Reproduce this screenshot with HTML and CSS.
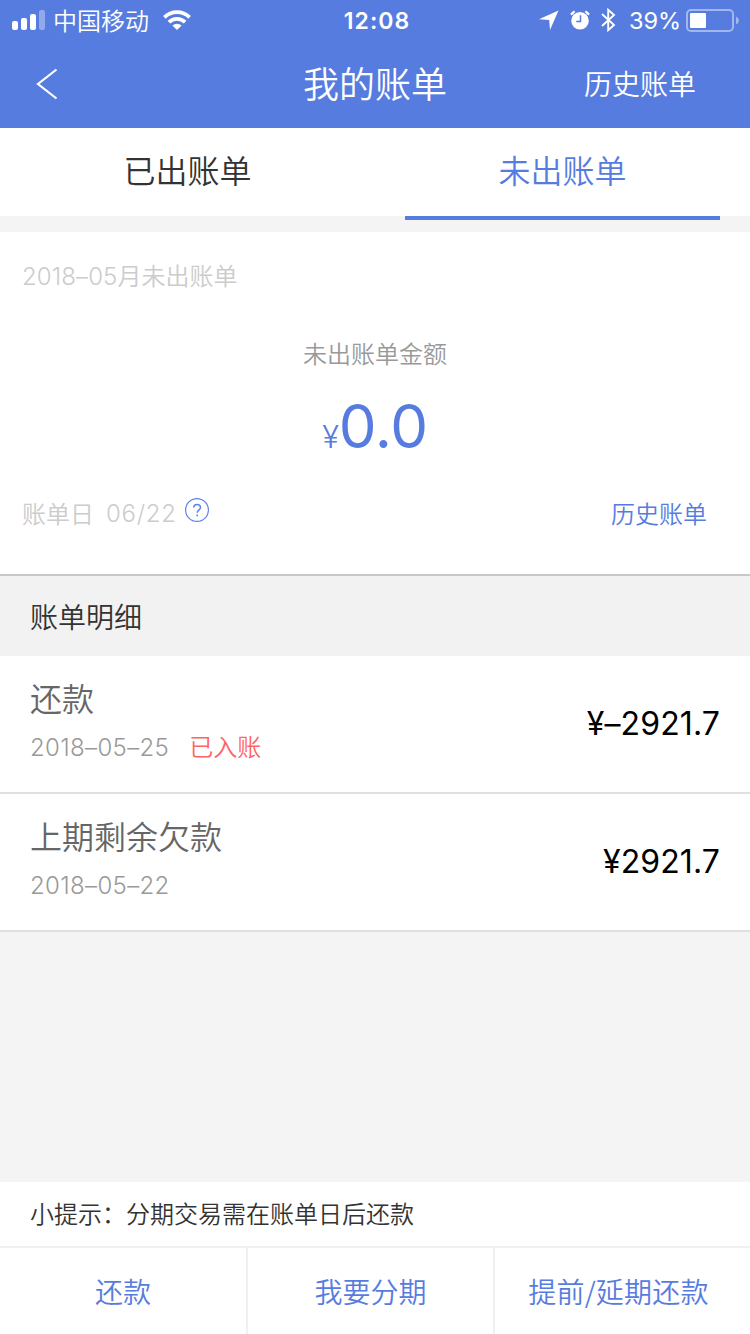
FILE: index.html
```
<!DOCTYPE html>
<html lang="zh-CN">
<head>
    <meta charset="UTF-8">
    <meta name="viewport" content="width=device-width, initial-scale=1.0">
    <title>我的账单</title>
    <link rel="stylesheet" href="styles.css">
</head>
<body>
    <div class="page">
        <header class="header">
            <div class="status">
                <div class="status-left">
                    <svg class="signal" width="34" height="20" viewBox="0 0 34 20" fill="#fff">
                        <rect x="0" y="11" width="6" height="9" rx="2"/>
                        <rect x="9" y="8" width="6" height="12" rx="2"/>
                        <rect x="18" y="4" width="6" height="16" rx="2"/>
                        <rect x="27" y="0" width="6" height="20" rx="2" opacity=".35"/>
                    </svg>
                    <span class="carrier">中国移动</span>
                    <svg class="wifi" width="28" height="20" viewBox="0 0 28 20" fill="none" stroke="#fff" stroke-width="3.8">
                        <path d="M1.4 7.3a18 18 0 0 1 25.2 0"/>
                        <path d="M5.9 12.1a11.6 11.6 0 0 1 16.2 0"/>
                        <path d="M14 20l-4.6-4.4a6.7 6.7 0 0 1 9.2 0z" fill="#fff" stroke="none"/>
                    </svg>
                </div>
                <div class="time">12:08</div>
                <div class="status-right">
                    <svg class="location" width="20" height="20" viewBox="0 0 20 20" fill="#fff">
                        <path d="M19.5 .5L11 20 10.2 10 0 9.2z"/>
                    </svg>
                    <svg class="alarm" width="20" height="20" viewBox="0 0 20 20">
                        <circle cx="10" cy="10.7" r="8.8" fill="#fff"/>
                        <path d="M.9 4.6L4.6 1.2M15.4 1.2l3.7 3.4" fill="none" stroke="#fff" stroke-width="2.2"/>
                        <path d="M10.5 5.2v6.2H6.2" fill="none" stroke="#577ce0" stroke-width="1.5"/>
                    </svg>
                    <svg class="bluetooth" width="15" height="24" viewBox="0 0 15 24" fill="none" stroke="#fff" stroke-width="1.9">
                        <path d="M1 6l12 11-5.8 5.2V1.8L13 7 1 18"/>
                    </svg>
                    <span class="percent">39%</span>
                    <svg class="battery" width="53" height="24" viewBox="0 0 53 24">
                        <rect x="1" y="1" width="46" height="21" rx="4" fill="none" stroke="#fff" stroke-width="2" opacity=".45"/>
                        <rect x="4" y="4" width="16" height="15" rx="1" fill="#fff"/>
                        <path d="M50 7.5q3 1.5 3 4t-3 4z" fill="#fff" opacity=".45"/>
                    </svg>
                </div>
            </div>
            <div class="nav">
                <svg class="back" width="22" height="32" viewBox="0 0 22 32" fill="none" stroke="#fff" stroke-width="2.2">
                    <path d="M20.5 1.5L2 16l18.5 14.5"/>
                </svg>
                <h1 class="title">我的账单</h1>
                <a class="history">历史账单</a>
            </div>
        </header>

        <div class="tabs">
            <div class="tab">已出账单</div>
            <div class="tab tab-active">未出账单</div>
        </div>

        <section class="summary">
            <div class="month"><span class="num">2018–05</span>月未出账单</div>
            <div class="amount-label">未出账单金额</div>
            <div class="amount"><span class="yen">¥</span>0.0</div>
            <div class="bill-day">
                <span>账单日</span>
                <span class="day num">06/22</span>
                <svg class="help" width="24" height="24" viewBox="0 0 24 24" fill="none" stroke="#5b82f0">
                    <circle cx="12" cy="12" r="11.4" stroke-width="1.2"/>
                    <path d="M8.7 9.6c0-4.2 6.8-4.2 6.8-.2 0 2.5-3.3 2.6-3.3 5.4" stroke-width="1.5"/>
                    <path d="M12.2 16.4v1.8" stroke-width="1.6"/>
                </svg>
                <a class="bill-link">历史账单</a>
            </div>
        </section>

        <h2 class="detail-title">账单明细</h2>
        <ul class="list">
            <li class="item">
                <div>
                    <div class="item-name">还款</div>
                    <div class="item-info"><span class="num">2018–05–25</span><span class="item-status">已入账</span></div>
                </div>
                <div class="item-money">¥–2921.7</div>
            </li>
            <li class="item">
                <div>
                    <div class="item-name">上期剩余欠款</div>
                    <div class="item-info"><span class="num">2018–05–22</span></div>
                </div>
                <div class="item-money">¥2921.7</div>
            </li>
        </ul>

        <footer class="footer">
            <div class="tip">小提示：分期交易需在账单日后还款</div>
            <div class="actions">
                <a class="action">还款</a>
                <a class="action">我要分期</a>
                <a class="action">提前/延期还款</a>
            </div>
        </footer>
    </div>
</body>
</html>
```
FILE: styles.css
```
* {
    box-sizing: border-box;
}
body {
    margin: 0;
    background-color: #f4f4f4;
    font-family: "Noto Sans CJK SC", sans-serif;
    font-weight: 350;
}
h1, h2, ul {
    margin: 0;
    padding: 0;
    font-weight: 350;
    list-style: none;
}
svg {
    display: block;
    flex: none;
}
.num {
    font-family: Inter, "Noto Sans CJK SC", sans-serif;
    font-weight: 350;
    letter-spacing: 0.35px;
}
.page {
    display: flex;
    flex-direction: column;
    width: 750px;
    height: 1334px;
}

/* header */
.header {
    height: 128px;
    background-color: #577ce0;
    color: #fff;
}
.status {
    display: grid;
    grid-template-columns: 300px 154px 296px;
    grid-template-rows: 40px;
    height: 40px;
    line-height: 40px;
    font-size: 24px;
}
.status-left,
.status-right {
    display: flex;
    align-items: center;
}
.status-left {
    padding-left: 12px;
}
.carrier {
    margin-left: 7px;
}
.wifi {
    margin-left: 14px;
}
.time {
    padding-top: 1px;
    font-family: Inter, sans-serif;
    font-weight: 600;
    font-size: 23px;
    letter-spacing: 1px;
    text-align: center;
}
.status-right {
    padding-left: 85px;
}
.alarm {
    margin-left: 11px;
}
.bluetooth {
    margin-left: 11px;
}
.percent {
    width: 64px;
    padding: 2px 0 0 13px;
    white-space: nowrap;
    font-family: Inter, sans-serif;
    font-weight: 400;
    font-size: 23.5px;
}
.battery {
    margin: 1px 0 0 6px;
}
.nav {
    display: grid;
    grid-template-columns: 220px 310px 220px;
    align-items: center;
    height: 88px;
}
.back {
    margin-left: 36px;
}
.title {
    height: 88px;
    font-size: 36px;
    line-height: 84px;
    text-align: center;
}
.history {
    height: 88px;
    font-size: 28px;
    line-height: 87px;
    text-align: center;
}

/* tabs */
.tabs {
    display: flex;
    height: 88px;
    margin-bottom: 16px;
    background-color: #fff;
}
.tab {
    flex: 1;
    line-height: 83px;
    font-size: 32px;
    text-align: center;
    color: #333;
}
.tab-active {
    position: relative;
    color: #577ce0;
}
.tab-active::after {
    content: "";
    position: absolute;
    left: 30px;
    right: 30px;
    bottom: -4px;
    height: 4px;
    background-color: #577ce0;
}

/* summary */
.summary {
    height: 344px;
    padding: 23px 43px 0 22px;
    background-color: #fff;
    border-bottom: 2px solid #c8c8c8;
    font-size: 24px;
    line-height: 40px;
}
.month {
    color: #ccc;
}
.month .num {
    letter-spacing: 0.1px;
}
.amount-label {
    margin: 36px -21px 0 0;
    text-align: center;
    color: #999;
}
.amount {
    margin: 17px -21px 0 0;
    font-family: Inter, sans-serif;
    font-weight: 400;
    font-size: 60px;
    line-height: 72px;
    text-align: center;
    letter-spacing: -0.3px;
    color: #577ce0;
}
.yen {
    font-size: 31px;
    font-weight: 350;
}
.bill-day {
    display: flex;
    align-items: center;
    height: 40px;
    margin-top: 20px;
    color: #ccc;
}
.day {
    padding-top: 1px;
    margin-left: 12px;
    letter-spacing: 0.7px;
}
.help {
    margin: 0 0 6px 8px;
}
.bill-link {
    margin-left: auto;
    color: #577ce0;
}

/* bill details */
.detail-title {
    height: 80px;
    padding-left: 30px;
    background-color: #f2f2f2;
    font-size: 28px;
    line-height: 80px;
    color: #333;
}
.item {
    display: flex;
    justify-content: space-between;
    height: 138px;
    padding: 18px 30px 0;
    background-color: #fff;
    border-bottom: 2px solid #e0e0e0;
}
.item-name {
    font-size: 32px;
    line-height: 46px;
    color: #666;
}
.item-info {
    margin-top: 6px;
    font-size: 24px;
    line-height: 40px;
    color: #999;
}
.item-status {
    margin-left: 20px;
    color: #ff6464;
}
.item-money {
    font-family: Inter, sans-serif;
    font-weight: 400;
    font-size: 32px;
    line-height: 100px;
    letter-spacing: 0.1px;
    color: #000;
}

/* footer */
.footer {
    margin-top: auto;
    background-color: #fff;
}
.tip {
    height: 66px;
    padding-left: 30px;
    border-bottom: 2px solid #f0f0f0;
    font-size: 24px;
    line-height: 62px;
    color: #333;
}
.actions {
    display: grid;
    grid-template-columns: 248px 247px 255px;
    height: 86px;
}
.action {
    border-right: 2px solid #f0f0f0;
    font-size: 28px;
    line-height: 87px;
    text-align: center;
    color: #577ce0;
}
.action:last-child {
    padding-right: 8px;
    border-right: none;
    letter-spacing: 0.2px;
}
```
